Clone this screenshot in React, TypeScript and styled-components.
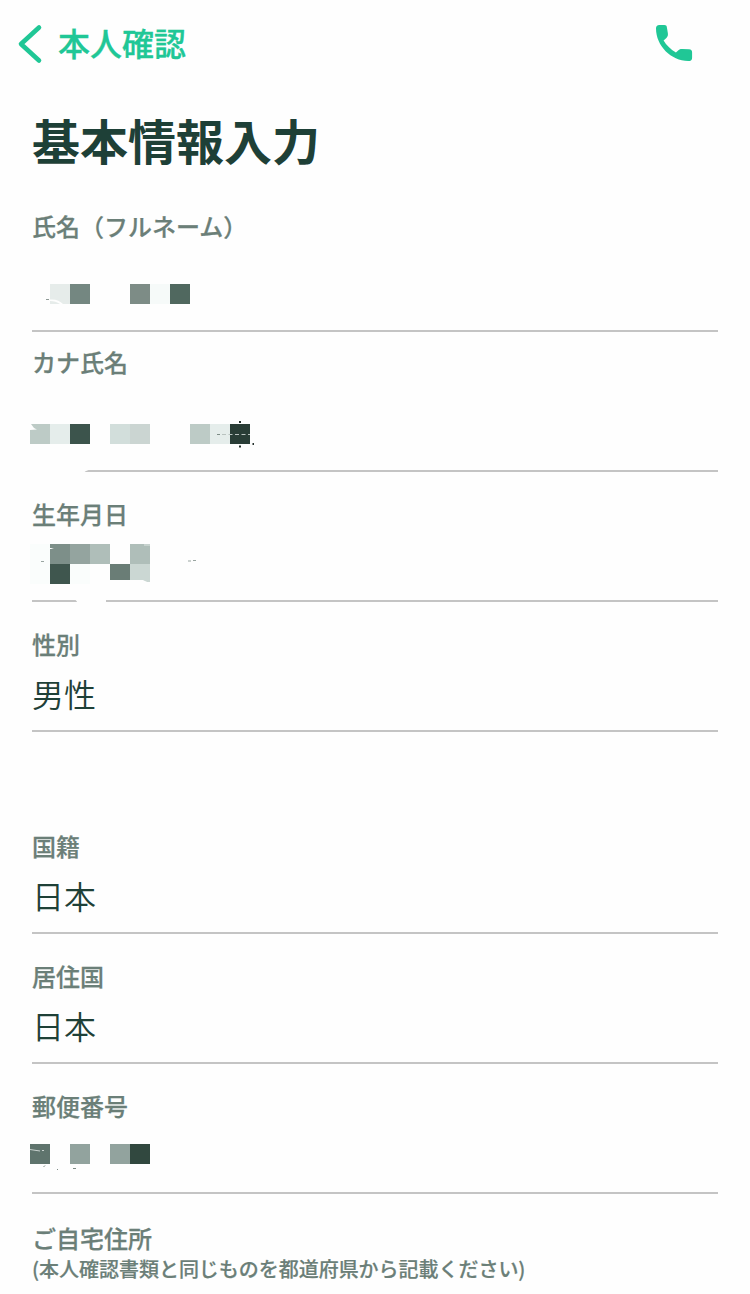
import React from "react";
import styled, { createGlobalStyle } from "styled-components";

const GlobalStyle = createGlobalStyle`
  *, *::before, *::after { box-sizing: border-box; }
  body {
    margin: 0;
    background: #fefefe;
    font-family: "Noto Sans CJK JP", "Noto Sans", sans-serif;
  }
`;

const Page = styled.div`
  height: 1294px;
  overflow: hidden;
  background: #fefefe;
`;

const Header = styled.header`
  display: flex;
  align-items: center;
  height: 88px;
  padding: 0 57px 0 16px;
  color: #20c796;
`;

const BackButton = styled.button`
  display: flex;
  align-items: center;
  gap: 14px;
  padding: 0;
  border: 0;
  background: none;
  color: inherit;
  font: 500 32px/32px "Noto Sans CJK JP", sans-serif;
  -webkit-text-stroke: 0.3px currentColor;
`;

const BackText = styled.span`
  padding-bottom: 4px;
`;

const CallButton = styled.button`
  display: flex;
  margin-left: auto;
  padding: 0 0 2px;
  border: 0;
  background: none;
  color: inherit;
`;

const Form = styled.main`
  display: flex;
  flex-direction: column;
  padding: 27px 32px 0;
`;

const Title = styled.h1`
  margin: 0;
  font-size: 48px;
  line-height: 48px;
  font-weight: 700;
  color: #1e4037;
`;

const Field = styled.section<{ $height: number; $top: number }>`
  flex: none;
  height: ${(p) => p.$height}px;
  padding-top: ${(p) => p.$top}px;
  border-bottom: 2px solid #c4c4c4;
`;

const Label = styled.div`
  font-size: 24px;
  line-height: 24px;
  font-weight: 500;
  color: #6b7f78;
  white-space: nowrap;
  -webkit-text-stroke: 0.25px currentColor;
`;

const Value = styled.div`
  margin-top: 21px;
  font-size: 32px;
  line-height: 32px;
  font-weight: 350;
  color: #1e4037;
`;

const Address = styled.section`
  padding-top: 32px;
`;

const Note = styled.div`
  margin-top: 9px;
  font-size: 20px;
  line-height: 20px;
  font-weight: 500;
  letter-spacing: -0.03px;
  color: #6b7f78;
  white-space: nowrap;
  -webkit-text-stroke: 0.2px currentColor;
`;

const MosaicArt = styled.svg<{ $gap: number }>`
  display: block;
  overflow: visible;
  margin: ${(p) => p.$gap}px 0 0 -2px;
`;

type Cell = [column: number, row: number, color: string, height?: number];

function Mosaic({ gap, cells, children }: { gap: number; cells: Cell[]; children?: React.ReactNode }) {
  return (
    <MosaicArt $gap={gap} width="240" height="20" shapeRendering="crispEdges">
      {cells.map(([c, r, color, h]) => (
        <rect key={`${c}-${r}`} x={c * 20} y={r * 20} width="20" height={h ?? 20} fill={color} />
      ))}
      <g shapeRendering="auto">{children}</g>
    </MosaicArt>
  );
}

export default function App() {
  return (
    <>
      <GlobalStyle />
      <Page>
        <Header>
          <BackButton>
            <svg width="28" height="40" viewBox="0 0 28 40" fill="none">
              <path d="M23 3.5L5 20L23 36.5" stroke="currentColor" strokeWidth="4.6" strokeLinecap="round" strokeLinejoin="round" />
            </svg>
            <BackText>本人確認</BackText>
          </BackButton>
          <CallButton aria-label="電話">
            <svg width="38" height="38" viewBox="0 0 38 38" fill="currentColor">
              <path d="M4.4 1H9.3C11 1 11.7 1.8 11.9 3.4L12.8 8.8C13.2 11.2 12.8 12.4 11.4 13.9L8.6 16.6C11.4 21.2 15.6 25.6 20.9 28.6L23.4 26.2C24.6 25.1 25.6 24.8 27.4 24.9L34 25.3C36.3 25.5 37.1 26.5 37.1 28.4V33.4C37.1 36 36 37 33.2 37C16 37 1 21.9 1 4.6C1 2.2 2 1 4.4 1Z" />
            </svg>
          </CallButton>
        </Header>
        <Form>
          <Title>基本情報入力</Title>
          <Field $height={169} $top={51}>
            <Label>氏名（フルネーム）</Label>
            <Mosaic
              gap={46}
              cells={[[1, 0, "#e6ecea"], [2, 0, "#748781"], [5, 0, "#7d8c86"], [6, 0, "#f6faf9"], [7, 0, "#50685f"]]}
            >
              <path d="M20 15.5C26 15 30 17 33 20H30C27 18 24 17 20 17Z" fill="#fefefe" />
              <path d="M16 15.5H19" stroke="#8d9995" />
            </Mosaic>
          </Field>
          <Field $height={140} $top={18}>
            <Label>カナ氏名</Label>
            <Mosaic
              gap={50}
              cells={[
                [0, 0, "#bdcbc6"], [1, 0, "#e5edeb"], [2, 0, "#3c544c"], [4, 0, "#d2dedb"],
                [5, 0, "#cbd5d2"], [8, 0, "#bdcbc6"], [9, 0, "#e5edeb"], [10, 0, "#293d36"],
              ]}
            >
              <path d="M0 0H1L4 4L7 5.5L0 6Z" fill="#fefefe" />
              <path d="M187 10.5H190" stroke="#7d8c86" />
              <path d="M192 10.5H220" stroke="#b9c2bf" strokeDasharray="4 2.5" />
              <path d="M209 -2H211M209 22.5H211M222.5 20H224" stroke="#25312d" strokeWidth="2" />
              <path d="M0 45H62C58 46 56 46.5 54 48.5H0Z" fill="#fefefe" />
            </Mosaic>
          </Field>
          <Field $height={130} $top={30}>
            <Label>生年月日</Label>
            <Mosaic
              gap={18}
              cells={[
                [0, 0, "#fafdfc", 40], [1, 0, "#7d8f89"], [2, 0, "#94a49f"], [3, 0, "#afbeb9"], [5, 0, "#afbeb9"],
                [1, 1, "#3f564e"], [2, 1, "#fafdfc"], [4, 1, "#6a7d76", 16], [5, 1, "#cbd7d3"],
              ]}
            >
              <path d="M20 4H24L21 5H20Z" fill="#fefefe" />
              <path d="M100 36H113C115 37 117 38.5 120 38V40.5H100Z" fill="#fefefe" />
              <path d="M114 1H120" stroke="#dfe7e4" />
              <path d="M11 17.5H14M158 17H161M163 16.5H166" stroke="#99a5a1" />
              <path d="M44 55H76V59H46C48 58 47 57 44 55Z" fill="#fefefe" />
            </Mosaic>
          </Field>
          <Field $height={130} $top={30}>
            <Label>性別</Label>
            <Value>男性</Value>
          </Field>
          <Field $height={202} $top={102}>
            <Label>国籍</Label>
            <Value>日本</Value>
          </Field>
          <Field $height={130} $top={30}>
            <Label>居住国</Label>
            <Value>日本</Value>
          </Field>
          <Field $height={130} $top={30}>
            <Label>郵便番号</Label>
            <Mosaic
              gap={26}
              cells={[[0, 0, "#5f746d"], [2, 0, "#92a39e"], [4, 0, "#92a39e"], [5, 0, "#31483f"]]}
            >
              <path d="M0 5.5L10 7M12 6.5H14" stroke="#c9d2cf" fill="none" />
              <path d="M13.5 23L15 21.5M27 25.5H28M43 24.5H46" stroke="#7d8c86" fill="none" />
            </Mosaic>
          </Field>
          <Address>
            <Label>ご自宅住所</Label>
            <Note>(本人確認書類と同じものを都道府県から記載ください)</Note>
          </Address>
        </Form>
      </Page>
    </>
  );
}
